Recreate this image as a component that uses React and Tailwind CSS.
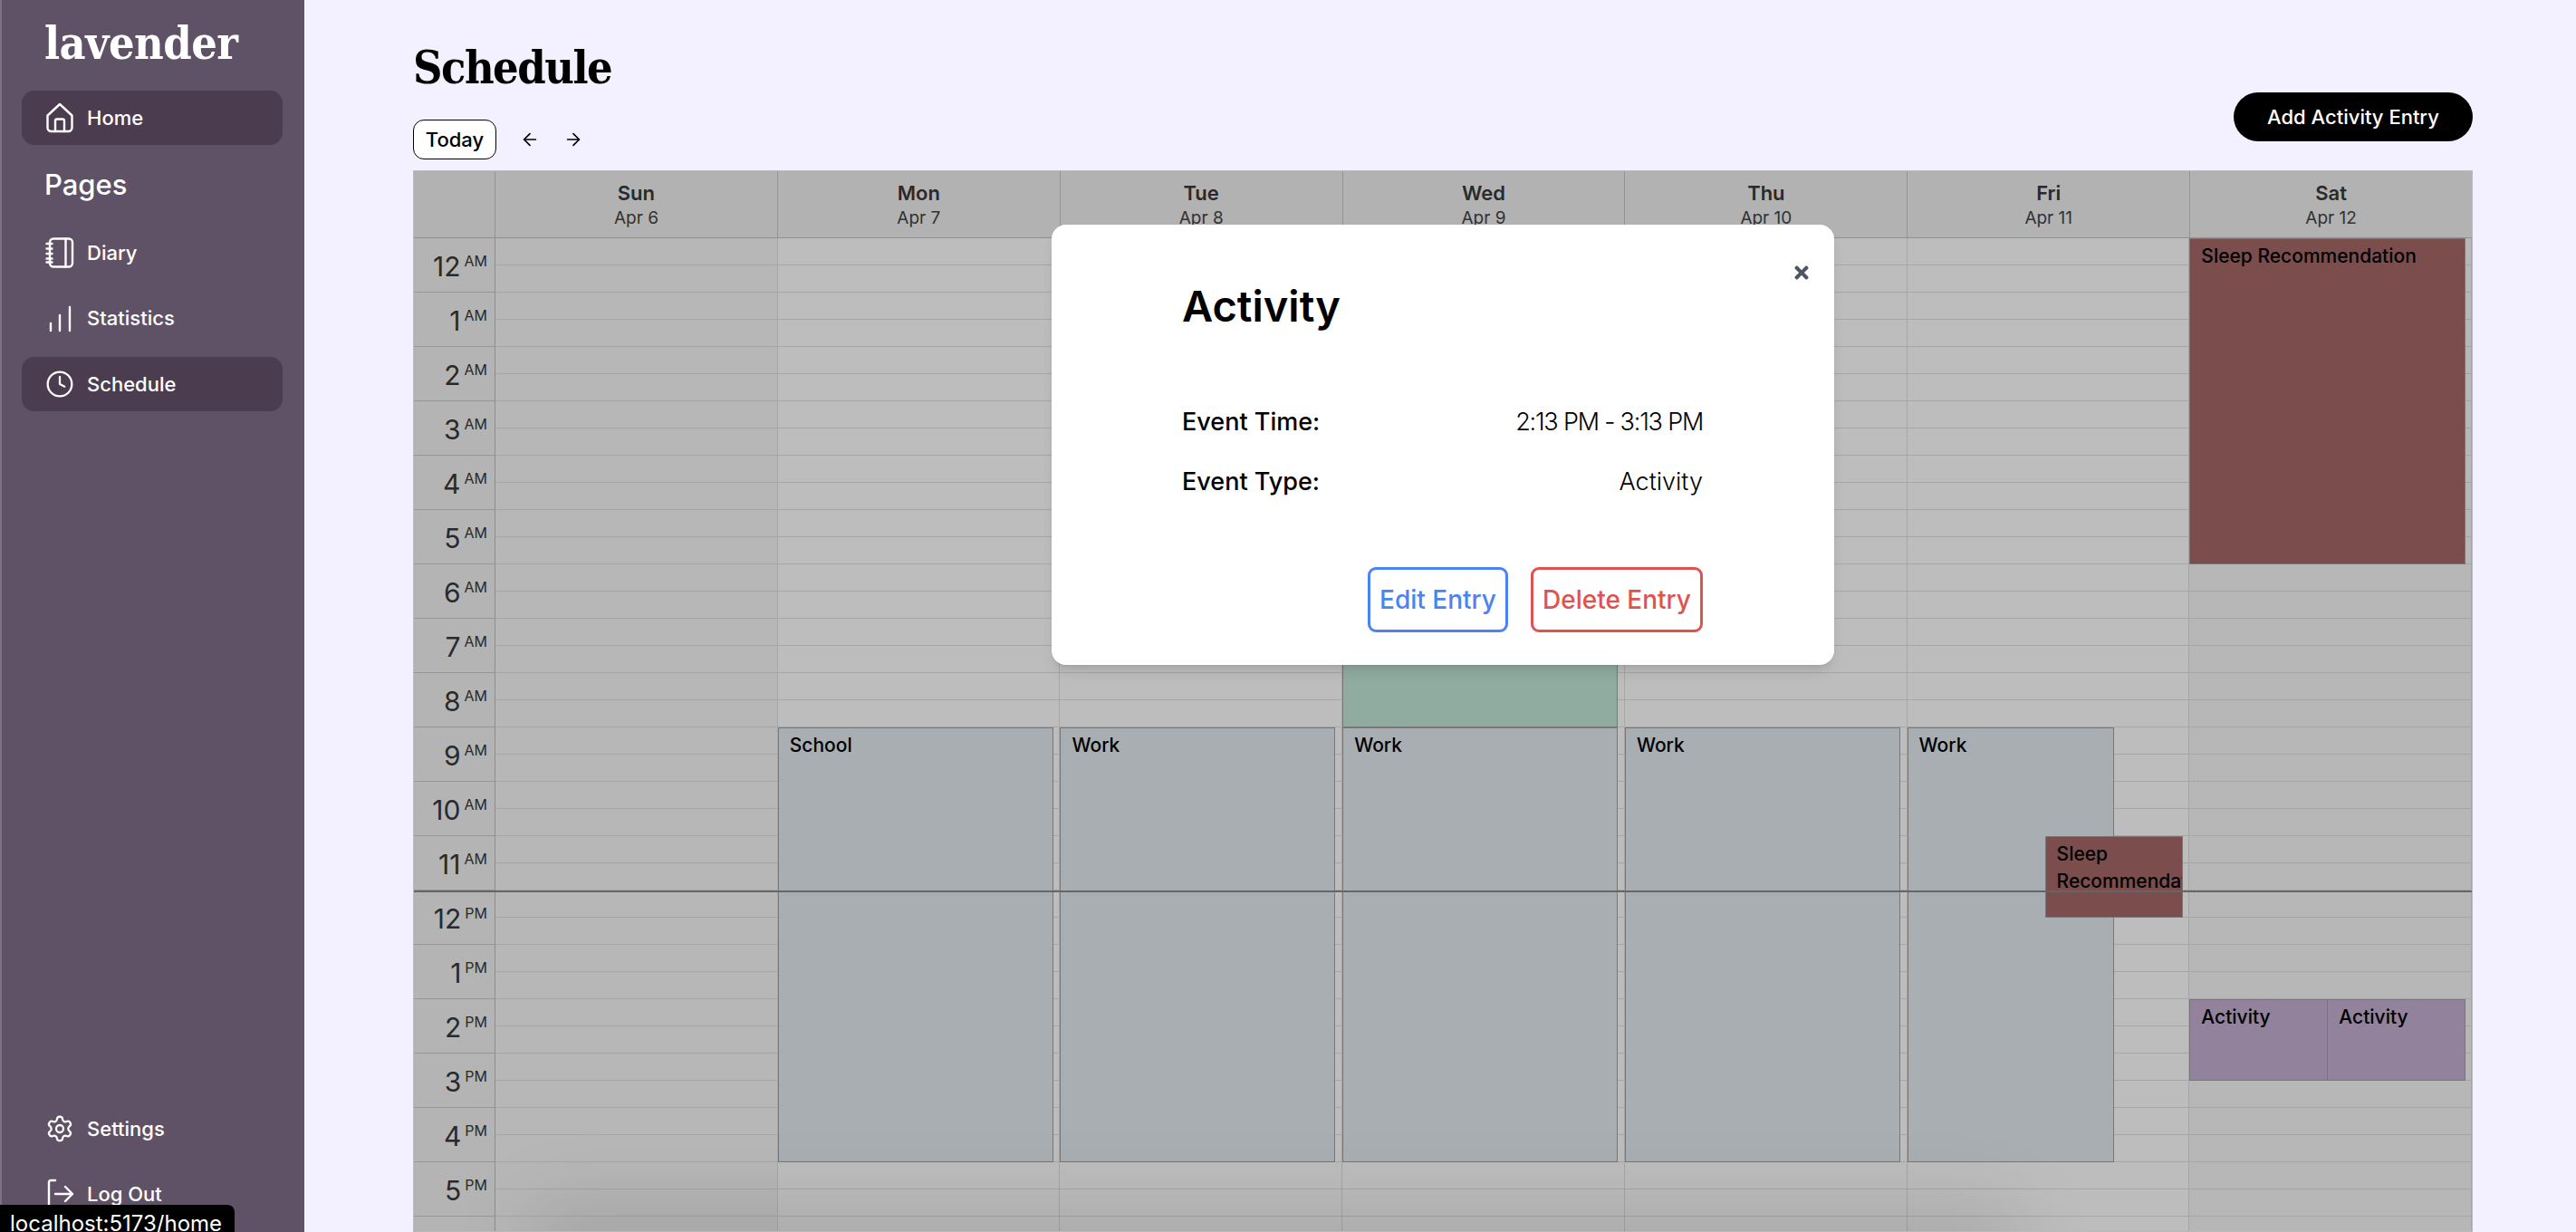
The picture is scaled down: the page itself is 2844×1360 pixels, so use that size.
import { ArrowLeft, ArrowRight, Clock, Settings } from 'lucide-react';
import { FaTimes } from 'react-icons/fa';

const days = [
  { name: 'Sun', date: 'Apr 6', weekend: true },
  { name: 'Mon', date: 'Apr 7' },
  { name: 'Tue', date: 'Apr 8' },
  { name: 'Wed', date: 'Apr 9' },
  { name: 'Thu', date: 'Apr 10' },
  { name: 'Fri', date: 'Apr 11' },
  { name: 'Sat', date: 'Apr 12', weekend: true },
];

const hours = [
  '12 AM', '1 AM', '2 AM', '3 AM', '4 AM', '5 AM', '6 AM', '7 AM', '8 AM', '9 AM', '10 AM', '11 AM',
  '12 PM', '1 PM', '2 PM', '3 PM', '4 PM', '5 PM',
];

const halfHours = Array.from({ length: 38 }, (_, i) => i);

// left / width in px inside the day column, top / height in px from midnight
const events = {
  Mon: [{ title: 'School', top: 540, height: 480, left: 0, width: 304, color: 'bg-[#e0e8ed]' }],
  Tue: [{ title: 'Work', top: 540, height: 480, left: 0, width: 304, color: 'bg-[#e0e8ed]' }],
  Wed: [
    { title: '', top: 420, height: 120, left: 0, width: 304, color: 'bg-[#c1e4d4]' },
    { title: 'Work', top: 540, height: 480, left: 0, width: 304, color: 'bg-[#e0e8ed]' },
  ],
  Thu: [{ title: 'Work', top: 540, height: 480, left: 0, width: 304, color: 'bg-[#e0e8ed]' }],
  Fri: [
    { title: 'Work', top: 540, height: 480, left: 0, width: 228, color: 'bg-[#e0e8ed]' },
    { title: 'Sleep Recommendation', top: 660, height: 90, left: 152, width: 152, color: 'bg-[#a46767]' },
  ],
  Sat: [
    { title: 'Sleep Recommendation', top: 0, height: 360, left: 0, width: 305, color: 'bg-[#a46767]' },
    { title: 'Activity', top: 840, height: 90, left: 0, width: 153, color: 'bg-[#c4aed1]' },
    { title: 'Activity', top: 840, height: 90, left: 152, width: 153, color: 'bg-[#c4aed1]' },
  ],
};

function HomeIcon() {
  return (
    <svg viewBox="0 0 32 34" className="w-[32px] h-[34px]" fill="none" stroke="currentColor" strokeWidth="2.4" strokeLinejoin="round" strokeLinecap="round">
      <path d="M2.5 14.5 16 2l13.5 12.500V28a4 4 0 0 1-4 4h-19a4 4 0 0 1-4-4z" />
      <path d="M11 32V20.500a2 2 0 0 1 2-2h6a2 2 0 0 1 2 2V32" />
    </svg>
  );
}

function DiaryIcon() {
  return (
    <svg viewBox="0 0 32 34" className="w-[32px] h-[34px]" fill="none" stroke="currentColor" strokeWidth="2.4" strokeLinecap="round" strokeLinejoin="round">
      <rect x="5" y="1.500" width="25" height="31" rx="4" />
      <path d="M22.500 1.500v31" />
      <path d="M1.500 7h6M1.500 12.500h6M1.500 18h6M1.500 23.500h6M1.500 27.500h6" />
    </svg>
  );
}

function StatsIcon() {
  return (
    <svg viewBox="0 0 32 30" className="w-[32px] h-[30px]" fill="none" stroke="currentColor" strokeWidth="2.400" strokeLinecap="round">
      <path d="M6 20v8M16 11v17M27 2v26" />
    </svg>
  );
}

function LogOutIcon() {
  return (
    <svg viewBox="0 0 32 34" className="w-[32px] h-[34px]" fill="none" stroke="currentColor" strokeWidth="2.400" strokeLinecap="round" strokeLinejoin="round">
      <path d="M11 2H6a2 2 0 0 0-2 2v26a2 2 0 0 0 2 2h5" />
      <path d="M11 17h19M22 9l8 8-8 8" />
    </svg>
  );
}

function NavItem({ icon, label, active }) {
  return (
    <div className={`flex h-[60px] items-center gap-[14px] rounded-[14px] pl-[26px] text-[22px] font-medium text-white ${active ? 'bg-[#4b3d4f]' : ''}`}>
      <span className="flex w-[32px] items-center justify-center">{icon}</span>
      <span>{label}</span>
    </div>
  );
}

function Sidebar() {
  return (
    <aside className="flex h-[1360px] w-[336px] shrink-0 flex-col border-l-2 border-[#7d7187] bg-[#5f5266] pb-[12px] pl-[22px] pr-[24px]">
      <div className="flex h-[100px] items-center pl-[25px] pb-[4px] font-['DejaVu_Serif_Condensed','DejaVu_Serif',serif] text-[50px] font-bold leading-none tracking-[-0.5px] text-white">
        lavender
      </div>
      <NavItem icon={<HomeIcon />} label="Home" active />
      <div className="flex h-[89px] items-center pl-[25px] text-[31px] font-medium text-white">Pages</div>
      <div className="flex flex-col gap-[12.500px]">
        <NavItem icon={<DiaryIcon />} label="Diary" />
        <NavItem icon={<StatsIcon />} label="Statistics" />
        <NavItem icon={<Clock size={34} strokeWidth={1.700} />} label="Schedule" active />
      </div>
      <div className="mt-auto flex flex-col gap-[12px]">
        <NavItem icon={<Settings size={34} strokeWidth={1.700} />} label="Settings" />
        <NavItem icon={<LogOutIcon />} label="Log Out" />
      </div>
    </aside>
  );
}

function TimeColumn() {
  return (
    <div className="w-[90px] shrink-0 border-r border-[#bdbdbd] bg-[#f1f1f1]">
      {hours.map((hour) => {
        const [num, period] = hour.split(' ');
        return (
          <div key={hour} className="flex h-[60px] items-start justify-end border-b border-[#c9c9c9] pr-[8px] pt-[13px] text-[#383838]">
            <span className="text-[30px] leading-[36px]">{num}</span>
            <span className="ml-[4px] mt-[2px] text-[16px] leading-[20px]">{period}</span>
          </div>
        );
      })}
      <div className="h-[60px]" />
    </div>
  );
}

function DayColumn({ day }) {
  return (
    <div className={`relative flex-1 border-r border-[#dedede] last:border-r-0 ${day.weekend ? 'bg-[#f5f5f5]' : 'bg-[#fcfcfc]'}`}>
      {halfHours.map((slot) => (
        <div key={slot} className="h-[30px] border-b border-[#dedede]" />
      ))}
      {(events[day.name] || []).map((event, i) => (
        <div
          key={i}
          className={`absolute overflow-hidden border border-[#9f9f9f] pl-[12px] pt-[4px] text-[21px] font-medium leading-[30px] text-black ${event.color}`}
          style={{ top: event.top, height: event.height, left: event.left, width: event.width }}
        >
          {event.title}
        </div>
      ))}
    </div>
  );
}

function EventModal() {
  return (
    <div className="absolute left-[704px] top-[59px] z-30 flex h-[486px] w-[864px] flex-col rounded-[16px] bg-white pl-[144px] pr-[145px] shadow-lg">
      <FaTimes className="absolute right-[25px] top-[42px] h-[22px] w-[22px] text-[#4b5563]" />
      <h2 className="mt-[54px] text-[47px] font-semibold leading-[72px] text-black">Activity</h2>
      <div className="mt-[59px] flex h-[66px] items-center justify-between text-[27px]">
        <span className="font-medium">Event Time:</span>
        <span className="font-light tracking-[-1.200px]">2:13 PM - 3:13 PM</span>
      </div>
      <div className="flex h-[66px] items-center justify-between text-[27px]">
        <span className="font-medium">Event Type:</span>
        <span className="font-light">Activity</span>
      </div>
      <div className="mt-[61px] flex justify-end gap-[25px] text-[28px] font-medium">
        <button className="h-[72px] w-[155px] rounded-[9px] border-[3px] border-[#4b83f0] text-[#4b83f0]">Edit Entry</button>
        <button className="h-[72px] w-[190px] rounded-[9px] border-[3px] border-[#e0524f] text-[#e0524f]">Delete Entry</button>
      </div>
    </div>
  );
}

function Calendar() {
  return (
    <div className="relative h-[1172px] overflow-hidden border border-[#bababa] bg-[#eeeeee]">
      <div className="flex h-[74px] border-b border-[#bfbfbf]">
        <div className="w-[90px] shrink-0 border-r border-[#c4c4c4]" />
        {days.map((day) => (
          <div key={day.name} className="flex flex-1 flex-col items-center border-r border-[#c4c4c4] pt-[8px] last:border-r-0">
            <span className="text-[22px] font-semibold leading-[32px] text-[#393939]">{day.name}</span>
            <span className="mt-[-2px] text-[19px] leading-[28px] text-[#444444]">{day.date}</span>
          </div>
        ))}
      </div>
      <div className="relative flex">
        <TimeColumn />
        {days.map((day) => (
          <DayColumn key={day.name} day={day} />
        ))}
        <div className="absolute inset-x-0 top-[720px] z-10 h-[2px] bg-[#888888]" />
      </div>
      <div className="absolute inset-0 z-20 bg-black/25" />
      <div className="absolute bottom-[-60px] left-[120px] z-20 h-[90px] w-[1660px] rounded-full bg-black/10 blur-2xl" />
      <EventModal />
    </div>
  );
}

export default function App() {
  return (
    <div className="relative flex h-[1360px] overflow-hidden bg-[#f3f1ff] font-['Inter',sans-serif] text-black">
      <Sidebar />
      <main className="min-w-0 flex-1 pl-[120px] pr-[114px] pt-[46px]">
        <div className="mb-[12px] flex items-end justify-between">
          <div>
            <h1 className="font-['DejaVu_Serif_Condensed','DejaVu_Serif',serif] text-[50px] font-bold leading-[58px] tracking-[-1.500px]">Schedule</h1>
            <div className="mt-[28px] flex h-[44px] items-center">
              <button className="h-[44px] w-[92px] rounded-[12px] border border-black bg-white text-[22px] font-medium">Today</button>
              <ArrowLeft size={22} strokeWidth={1.800} className="ml-[26px]" />
              <ArrowRight size={22} strokeWidth={1.800} className="ml-[26px]" />
            </div>
          </div>
          <button className="mb-[20px] h-[54px] w-[264px] rounded-full bg-black text-[22px] font-medium text-white">Add Activity Entry</button>
        </div>
        <Calendar />
      </main>
      <div className="absolute bottom-0 left-0 h-[30px] w-[259px] overflow-hidden rounded-tr-[8px] bg-black pl-[11px] pt-[6px] text-[24px] leading-[30px] text-white">
        localhost:5173/home
      </div>
    </div>
  );
}
